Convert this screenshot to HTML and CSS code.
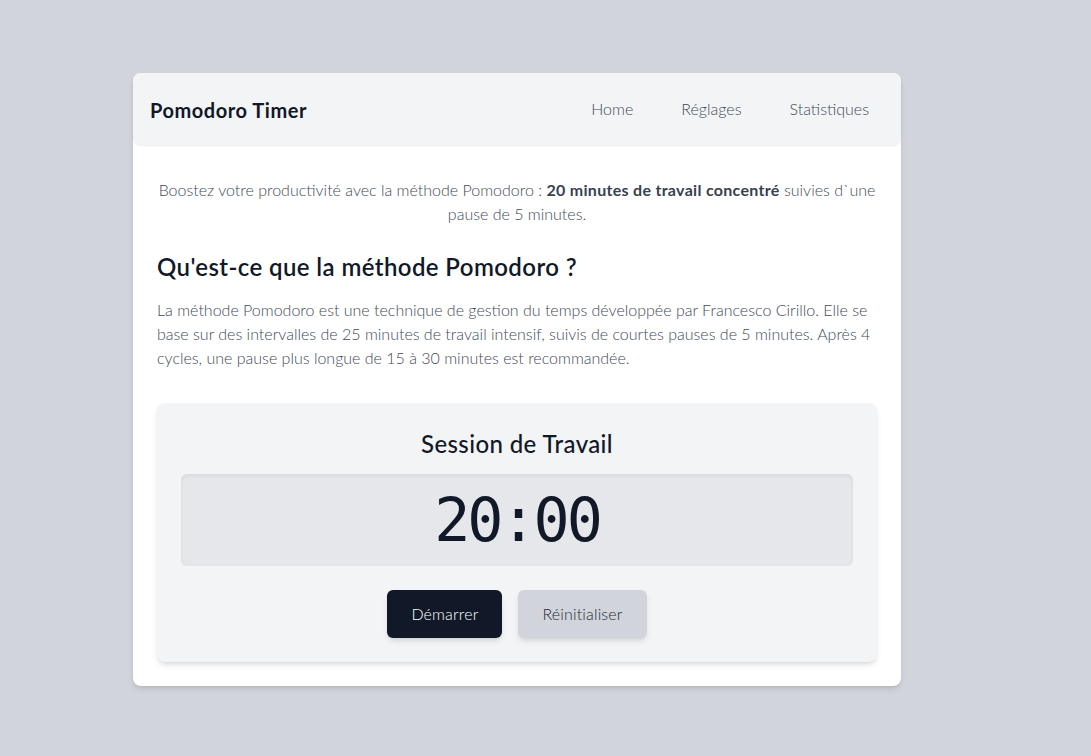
FILE: index.html
```html
<!DOCTYPE html>
<html lang="fr">
<head>
<meta charset="utf-8">
<title>Pomodoro Timer</title>
<link rel="stylesheet" href="styles.css">
</head>
<body>
<div class="page">
  <div class="card">
    <header class="header">
      <h1 class="brand">Pomodoro Timer</h1>
      <nav class="nav">
        <a href="#">Home</a>
        <a href="#">Réglages</a>
        <a href="#">Statistiques</a>
      </nav>
    </header>
    <main class="main">
      <p class="intro">Boostez votre productivité avec la méthode Pomodoro : <strong>20 minutes de travail concentré</strong> suivies d`une pause de 5 minutes.</p>
      <h2 class="title">Qu'est-ce que la méthode Pomodoro ?</h2>
      <p class="text">La méthode Pomodoro est une technique de gestion du temps développée par Francesco Cirillo. Elle se base sur des intervalles de 25 minutes de travail intensif, suivis de courtes pauses de 5 minutes. Après 4 cycles, une pause plus longue de 15 à 30 minutes est recommandée.</p>
      <section class="timer">
        <h3 class="session">Session de Travail</h3>
        <div class="display">20:00</div>
        <div class="actions">
          <button class="btn btn-dark">Démarrer</button>
          <button class="btn btn-light">Réinitialiser</button>
        </div>
      </section>
    </main>
  </div>
</div>
</body>
</html>
```

FILE: styles.css
```css
* { box-sizing: border-box; }
html, body { margin: 0; padding: 0; }
body {
  background: #d1d5db;
  font-family: Lato, "Open Sans", "Liberation Sans", sans-serif;
  color: #424b59;
  height: 756px;
}
.page {
  padding: 73px 0 0 133px;
}
.card {
  width: 768px;
  background: #ffffff;
  border-radius: 8px;
  box-shadow: 0 4px 6px -1px rgba(0,0,0,0.1), 0 2px 4px -2px rgba(0,0,0,0.1);
}
.header {
  height: 72px;
  background: #f3f4f6;
  border-radius: 8px;
  box-shadow: 0 1px 2px rgba(0,0,0,0.08);
  display: flex;
  align-items: center;
  justify-content: space-between;
  padding: 0 16px 0 17px;
}
.brand {
  margin: 2px 0 0;
  font-size: 20px;
  font-weight: 700;
  letter-spacing: 0.55px;
  color: #111827;
  line-height: 28px;
}
.nav {
  display: flex;
  gap: 16px;
}
.nav a {
  padding: 0 16px;
  font-size: 16px;
  font-weight: 300;
  color: #424b59;
  text-decoration: none;
  line-height: 24px;
}
.main {
  padding: 33px 24px 24px;
}
.intro {
  margin: 0 0 25px;
  text-align: center;
  font-size: 16px;
  line-height: 24px;
  font-weight: 300;
}
.intro strong {
  font-weight: 700;
  letter-spacing: 0.3px;
  color: #374151;
}
.title {
  margin: 0 0 15px;
  font-size: 24px;
  line-height: 32px;
  font-weight: 600;
  letter-spacing: 0.4px;
  color: #111827;
}
.text {
  margin: 0;
  font-size: 16px;
  line-height: 24px;
  font-weight: 300;
}
.timer {
  margin-top: 33px;
  background: #f3f4f6;
  border-radius: 8px;
  padding: 25px 24px 24px;
  box-shadow: 0 4px 6px -1px rgba(0,0,0,0.1), 0 2px 4px -2px rgba(0,0,0,0.1);
  text-align: center;
}
.session {
  margin: 0 0 14px;
  font-size: 24px;
  line-height: 32px;
  font-weight: 500;
  letter-spacing: 0.4px;
  color: #111827;
}
.display {
  background: #e5e7eb;
  border-radius: 6px;
  box-shadow: inset 0 2px 4px rgba(0,0,0,0.06);
  padding: 16px;
  font-family: "DejaVu Sans Mono", "Liberation Mono", monospace;
  font-size: 60px;
  line-height: 60px;
  letter-spacing: -3px;
  color: #111827;
}
.actions {
  margin-top: 24px;
  display: flex;
  justify-content: center;
  gap: 16px;
}
.btn {
  font-family: inherit;
  font-size: 16px;
  line-height: 24px;
  font-weight: 300;
  letter-spacing: 0.15px;
  padding: 12px 24px;
  border: none;
  border-radius: 6px;
  box-shadow: 0 4px 6px -1px rgba(0,0,0,0.1), 0 2px 4px -2px rgba(0,0,0,0.1);
  cursor: pointer;
}
.btn-dark {
  background: #111827;
  color: #ffffff;
}
.btn-light {
  background: #d1d5db;
  color: #1f2937;
}
```
